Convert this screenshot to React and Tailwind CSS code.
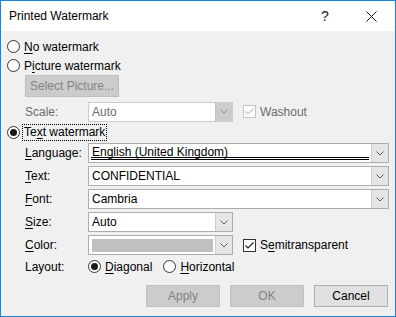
import React from "react";

const Chevron = ({ color = "#606060" }) => (
  <svg width="8" height="5" viewBox="0 0 8 5">
    <polyline points="0.5,0.5 4,4 7.5,0.5" fill="none" stroke={color} strokeWidth="1" />
  </svg>
);

const Radio = ({ checked }) => (
  <span className="w-[13px] h-[13px] rounded-full border border-[#333333] bg-white flex items-center justify-center shrink-0">
    {checked && <span className="w-[7px] h-[7px] rounded-full bg-[#1a1a1a]" />}
  </span>
);

const Check = ({ disabled }) => (
  <span
    className={
      "w-[13px] h-[13px] border bg-white flex items-center justify-center shrink-0 " +
      (disabled ? "border-[#c4c4c4]" : "border-[#333333]")
    }
  >
    <svg width="11" height="11" viewBox="0 0 11 11">
      <polyline
        points="1.5,5.5 4,8 9.5,2.5"
        fill="none"
        stroke={disabled ? "#c4c4c4" : "#222222"}
        strokeWidth="1.2"
      />
    </svg>
  </span>
);

const Combo = ({ w, children, disabled }) => (
  <div
    className={
      "h-[20px] flex border " +
      (disabled ? "border-[#cccccc] bg-white" : "border-[#adadad] bg-white") +
      " " +
      w
    }
  >
    <div className="flex-1 flex items-center pl-[3px] overflow-hidden relative">{children}</div>
    <div
      className={
        "w-[17px] flex items-center justify-center border-l " +
        (disabled ? "bg-[#cccccc] border-[#bfbfbf]" : "bg-[#e5e5e5] border-[#cfcfcf]")
      }
    >
      <Chevron color={disabled ? "#8a8a8a" : "#606060"} />
    </div>
  </div>
);

const U = ({ children }) => <span className="underline underline-offset-[2px]">{children}</span>;

export default function App() {
  return (
    <div className="w-[396px] h-[317px] border border-[#1883d7] bg-[#f0f0f0] flex flex-col font-['Liberation_Sans',sans-serif] text-[12px] text-black leading-none overflow-hidden">
      {/* title bar */}
      <div className="h-[30px] bg-white flex items-center shrink-0">
        <span className="pl-[8px] flex-1">Printed Watermark</span>
        <span className="w-[46px] text-center text-[14px] text-[#222]">?</span>
        <span className="w-[46px] flex justify-center mr-[1px]">
          <svg width="11" height="11" viewBox="0 0 11 11">
            <path d="M0.5 0.5 L10.5 10.5 M10.5 0.5 L0.5 10.5" stroke="#111" strokeWidth="1" />
          </svg>
        </span>
      </div>

      <div className="flex flex-col pl-[6px] pt-[6px]">
        <div className="h-[19px] flex items-center gap-[4px]">
          <Radio />
          <span>
            <U>N</U>o watermark
          </span>
        </div>
        <div className="h-[19px] flex items-center gap-[4px]">
          <Radio />
          <span>
            P<U>i</U>cture watermark
          </span>
        </div>
        <div className="pl-[18px]">
          <div className="w-[94px] h-[22px] border border-[#bfbfbf] bg-[#cccccc] flex items-center justify-center text-[#838383]">
            Select Picture...
          </div>
        </div>
        <div className="mt-[4px] h-[21px] flex items-center pl-[18px]">
          <span className="w-[63px] text-[#6d6d6d]">Scale:</span>
          <Combo w="w-[145px]" disabled>
            <span className="text-[#6d6d6d]">Auto</span>
          </Combo>
          <span className="ml-[10px] flex items-center gap-[4px]">
            <Check disabled />
            <span className="text-[#6d6d6d]">Washout</span>
          </span>
        </div>
        <div className="mt-[1px] h-[18px] flex items-center gap-[2px]">
          <Radio checked />
          <span className="border border-dotted border-black px-[1px] h-[17px] flex items-center">
            Te<U>x</U>t watermark
          </span>
        </div>

        <div className="mt-[2px] flex flex-col gap-[3px] pl-[18px]">
          <div className="flex items-center">
            <span className="w-[63px]">
              <U>L</U>anguage:
            </span>
            <Combo w="w-[301px]">
              <span className="-mt-[2px]">English (United Kingdom)</span>
              <span className="absolute left-[2px] right-[2px] bottom-[2px] h-[3px] border-y border-black" />
            </Combo>
          </div>
          <div className="flex items-center">
            <span className="w-[63px]">
              <U>T</U>ext:
            </span>
            <Combo w="w-[301px]">
              <span>CONFIDENTIAL</span>
            </Combo>
          </div>
          <div className="flex items-center">
            <span className="w-[63px]">
              <U>F</U>ont:
            </span>
            <Combo w="w-[301px]">
              <span>Cambria</span>
            </Combo>
          </div>
          <div className="flex items-center">
            <span className="w-[63px]">
              <U>S</U>ize:
            </span>
            <Combo w="w-[145px]">
              <span>Auto</span>
            </Combo>
          </div>
          <div className="flex items-center">
            <span className="w-[63px]">
              <U>C</U>olor:
            </span>
            <Combo w="w-[145px]">
              <span className="block h-[13px] w-[121px] bg-[#c0c0c0]" />
            </Combo>
            <span className="ml-[10px] flex items-center gap-[4px]">
              <Check />
              <span>
                S<U>e</U>mitransparent
              </span>
            </span>
          </div>
          <div className="h-[17px] flex items-center">
            <span className="w-[63px]">Layout:</span>
            <span className="flex items-center gap-[4px]">
              <Radio checked />
              <span>
                <U>D</U>iagonal
              </span>
            </span>
            <span className="ml-[11px] flex items-center gap-[4px]">
              <Radio />
              <span>
                <U>H</U>orizontal
              </span>
            </span>
          </div>
        </div>

        <div className="mt-[10px] flex justify-end gap-[10px] pr-[7px]">
          <div className="w-[74px] h-[22px] border border-[#bfbfbf] bg-[#cccccc] flex items-center justify-center text-[#838383]">
            Apply
          </div>
          <div className="w-[74px] h-[22px] border border-[#bfbfbf] bg-[#cccccc] flex items-center justify-center text-[#838383]">
            OK
          </div>
          <div className="w-[74px] h-[22px] border border-[#adadad] bg-[#e1e1e1] flex items-center justify-center">
            Cancel
          </div>
        </div>
      </div>
    </div>
  );
}
